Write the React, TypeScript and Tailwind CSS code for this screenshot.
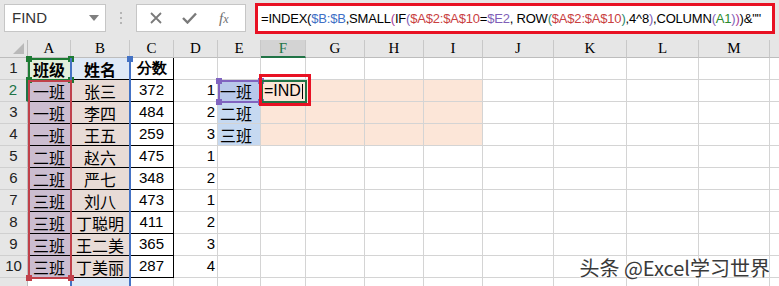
import React from "react";

const cols = [
  { key: "A", w: 43 },
  { key: "B", w: 59 },
  { key: "C", w: 44 },
  { key: "D", w: 44 },
  { key: "E", w: 43 },
  { key: "F", w: 45 },
  { key: "G", w: 59 },
  { key: "H", w: 59 },
  { key: "I", w: 59 },
  { key: "J", w: 71 },
  { key: "K", w: 73 },
  { key: "L", w: 72 },
  { key: "M", w: 71 },
  { key: "N", w: 40 },
];

const data = [
  ["班级", "姓名", "分数", "", ""],
  ["一班", "张三", "372", "1", "一班"],
  ["一班", "李四", "484", "2", "二班"],
  ["一班", "王五", "259", "3", "三班"],
  ["二班", "赵六", "475", "1", ""],
  ["二班", "严七", "348", "2", ""],
  ["三班", "刘八", "473", "1", ""],
  ["三班", "丁聪明", "411", "2", ""],
  ["三班", "王二美", "365", "3", ""],
  ["三班", "丁美丽", "287", "4", ""],
  ["", "", "", "", ""],
];

const cjk = "font-['Microsoft_YaHei','Noto_Sans_CJK_SC',sans-serif]";
const latin = "font-['Liberation_Sans',Arial,sans-serif]";

function cellClass(r: number, c: number) {
  const base = "h-[22px] border-r border-b flex items-center whitespace-nowrap";
  const inTable = r <= 9 && c <= 2;
  const border = inTable ? "border-black" : "border-[#d4d4d4]";
  let bg = "bg-white";
  if (c === 0) bg = r === 0 ? "bg-[#e2efda]" : r <= 9 ? "bg-[#cbbdd0]" : "bg-white";
  if (c === 1) bg = r === 0 || r === 10 ? "bg-[#dfe9f6]" : "bg-[#e8dbd6]";
  if (c === 4 && r === 1) bg = "bg-[#b8c8ea]";
  if (c === 4 && (r === 2 || r === 3)) bg = "bg-[#c6d9f1]";
  if (c >= 5 && c <= 8 && r >= 1 && r <= 3) bg = "bg-[#fce6d8]";
  let align = "justify-center";
  if (c === 3) align = "justify-end pr-[2px]";
  if (c === 4) align = "justify-start pl-[2px]";
  const font = c === 2 || c === 3 ? `${latin} text-[15px]` : `${cjk} text-[16px]`;
  const weight = r === 0 ? "font-bold" : "";
  return `${base} ${border} ${bg} ${align} ${font} ${weight} text-black`;
}

function Handle({ className }: { className: string }) {
  return <div className={`absolute w-[6px] h-[6px] ${className}`} />;
}

function Toolbar() {
  return (
    <div className="h-[40px] bg-[#e6e6e6] flex items-start pt-[3px] pl-[4px]">
      <div className="mt-[1px] w-[102px] h-[28px] bg-white border border-[#c6c6c6] flex items-center justify-between pl-[7px] pr-[6px]">
        <span className={`${latin} text-[15px] text-[#333]`}>FIND</span>
        <svg width="10" height="6" viewBox="0 0 10 6">
          <path d="M0 0 L10 0 L5 6 Z" fill="#7f7f7f" />
        </svg>
      </div>
      <div className="ml-[14px] mt-[9px] flex flex-col gap-[3px]">
        <div className="w-[2px] h-[2px] bg-[#b5b5b5]" />
        <div className="w-[2px] h-[2px] bg-[#b5b5b5]" />
        <div className="w-[2px] h-[2px] bg-[#b5b5b5]" />
      </div>
      <div className="ml-[14px] mt-[1px] w-[110px] h-[28px] bg-white border border-[#c6c6c6] flex items-center pl-[13px] gap-[20px]">
        <svg width="12" height="12" viewBox="0 0 12 12">
          <path d="M1 1 L11 11 M11 1 L1 11" stroke="#7a7a7a" strokeWidth="1.8" />
        </svg>
        <svg width="15" height="12" viewBox="0 0 15 12">
          <path d="M1 6 L5.5 10.5 L14 1.5" stroke="#7a7a7a" strokeWidth="2.4" fill="none" />
        </svg>
        <span className="ml-[2px] font-['Liberation_Serif',serif] italic text-[15px] text-[#707070]">
          f<span className="text-[12px]">x</span>
        </span>
      </div>
      <div className="ml-[9px] w-[520px] h-[31px] bg-white border-[3px] border-[#e81123] flex items-center overflow-hidden">
        <span className={`${latin} text-[13px] pl-[3px] tracking-[-0.2px] text-black whitespace-nowrap`}>
          =INDEX(<span className="text-[#3e6fc6]">$B:$B</span>,SMALL
          <span className="text-[#a8409a]">(</span>IF<span className="text-[#7f5fb8]">(</span>
          <span className="text-[#c9403f]">$A$2:$A$10</span>=<span className="text-[#7f5fb8]">$E2</span>, ROW
          <span className="text-[#2a8a6e]">(</span>
          <span className="text-[#c9403f]">$A$2:$A$10</span>
          <span className="text-[#2a8a6e]">)</span>,4^8<span className="text-[#7f5fb8]">)</span>,COLUMN
          <span className="text-[#7f5fb8]">(</span>
          <span className="text-[#2a8a2e]">A1</span>
          <span className="text-[#7f5fb8]">)</span>
          <span className="text-[#a8409a]">)</span>)&amp;""
        </span>
      </div>
    </div>
  );
}

export default function App() {
  const template = `28px ${cols.map((c) => `${c.w}px`).join(" ")}`;
  return (
    <div className="w-[779px] h-[286px] overflow-hidden bg-white">
      <Toolbar />
      <div className="relative">
        <div className="grid" style={{ gridTemplateColumns: template }}>
          {/* header row */}
          <div className="h-[18px] bg-[#e6e6e6] border-r border-b border-[#bdbdbd] flex items-end justify-end pr-[3px] pb-[3px]">
            <svg width="11" height="11" viewBox="0 0 11 11">
              <path d="M11 0 L11 11 L0 11 Z" fill="#b9b9b9" />
            </svg>
          </div>
          {cols.map((c) => (
            <div
              key={c.key}
              className={`h-[18px] flex items-center justify-center border-r border-[#c8c8c8] font-['Liberation_Serif',serif] text-[15px] leading-none ${
                c.key === "F"
                  ? "bg-[#d3d3d3] text-[#217346] border-b-2 border-b-[#217346]"
                  : "bg-[#e6e6e6] text-black border-b border-b-[#bdbdbd]"
              }`}
            >
              {c.key === "N" ? "" : c.key}
            </div>
          ))}
          {data.map((row, r) => (
            <React.Fragment key={r}>
              <div
                className={`h-[22px] bg-[#e6e6e6] flex items-center justify-center ${latin} text-[15px] border-b border-[#d0d0d0] ${
                  r === 1
                    ? "text-[#217346] bg-[#d3d3d3] border-r-2 border-r-[#217346]"
                    : "text-[#222] border-r border-r-[#bdbdbd]"
                }`}
              >
                {r < 10 ? r + 1 : ""}
              </div>
              {cols.map((c, ci) => (
                <div key={c.key} className={cellClass(r, ci)}>
                  {ci === 5 && r === 1 ? (
                    <span className={`${latin} text-[16px] pl-[3px] w-full`}>
                      =IND<span className="inline-block w-[1px] h-[15px] bg-black align-middle ml-[1px]" />
                    </span>
                  ) : ci <= 4 ? (
                    row[ci]
                  ) : null}
                </div>
              ))}
            </React.Fragment>
          ))}
        </div>

        {/* A1 reference (green) */}
        <div className="absolute left-[28px] top-[18px] w-[44px] h-[23px] border-2 border-[#1e7b34]" />
        <Handle className="left-[26px] top-[16px] bg-[#1e7b34]" />
        <Handle className="left-[68px] top-[16px] bg-[#1e7b34]" />
        <Handle className="left-[26px] top-[37px] bg-[#1e7b34]" />
        <Handle className="left-[68px] top-[37px] bg-[#1e7b34]" />

        {/* $B:$B reference (blue) */}
        <div className="absolute left-[70px] top-[18px] w-[61px] h-[240px] border-x-2 border-[#4472c4]" />
        <Handle className="left-[127px] top-[16px] bg-[#4472c4]" />

        {/* $A$2:$A$10 reference (red) */}
        <div className="absolute left-[28px] top-[40px] w-[44px] h-[199px] border-2 border-[#c0404a]" />
        <Handle className="left-[68px] top-[235px] bg-[#c0404a]" />
        <Handle className="left-[26px] top-[235px] bg-[#c0404a]" />

        {/* $E2 reference (purple) */}
        <div className="absolute left-[218px] top-[40px] w-[44px] h-[23px] border-2 border-[#8064c0]" />
        <Handle className="left-[216px] top-[38px] bg-[#8064c0]" />
        <Handle className="left-[258px] top-[38px] bg-[#8064c0]" />
        <Handle className="left-[216px] top-[59px] bg-[#8064c0]" />
        <Handle className="left-[258px] top-[59px] bg-[#8064c0]" />

        {/* active cell F2 */}
        <div className="absolute left-[261px] top-[40px] w-[46px] h-[23px] border-2 border-[#217346]" />
        <div className="absolute left-[259px] top-[34px] w-[52px] h-[32px] border-[3px] border-[#e81123]" />

        {/* watermark */}
        <div
          className={`absolute right-[9px] top-[213px] ${cjk} text-[20px] text-[#3a3a3a] [text-shadow:0_0_2px_#fff,0_0_2px_#fff,0_0_3px_#fff]`}
        >
          头条 @Excel学习世界
        </div>
      </div>
    </div>
  );
}
